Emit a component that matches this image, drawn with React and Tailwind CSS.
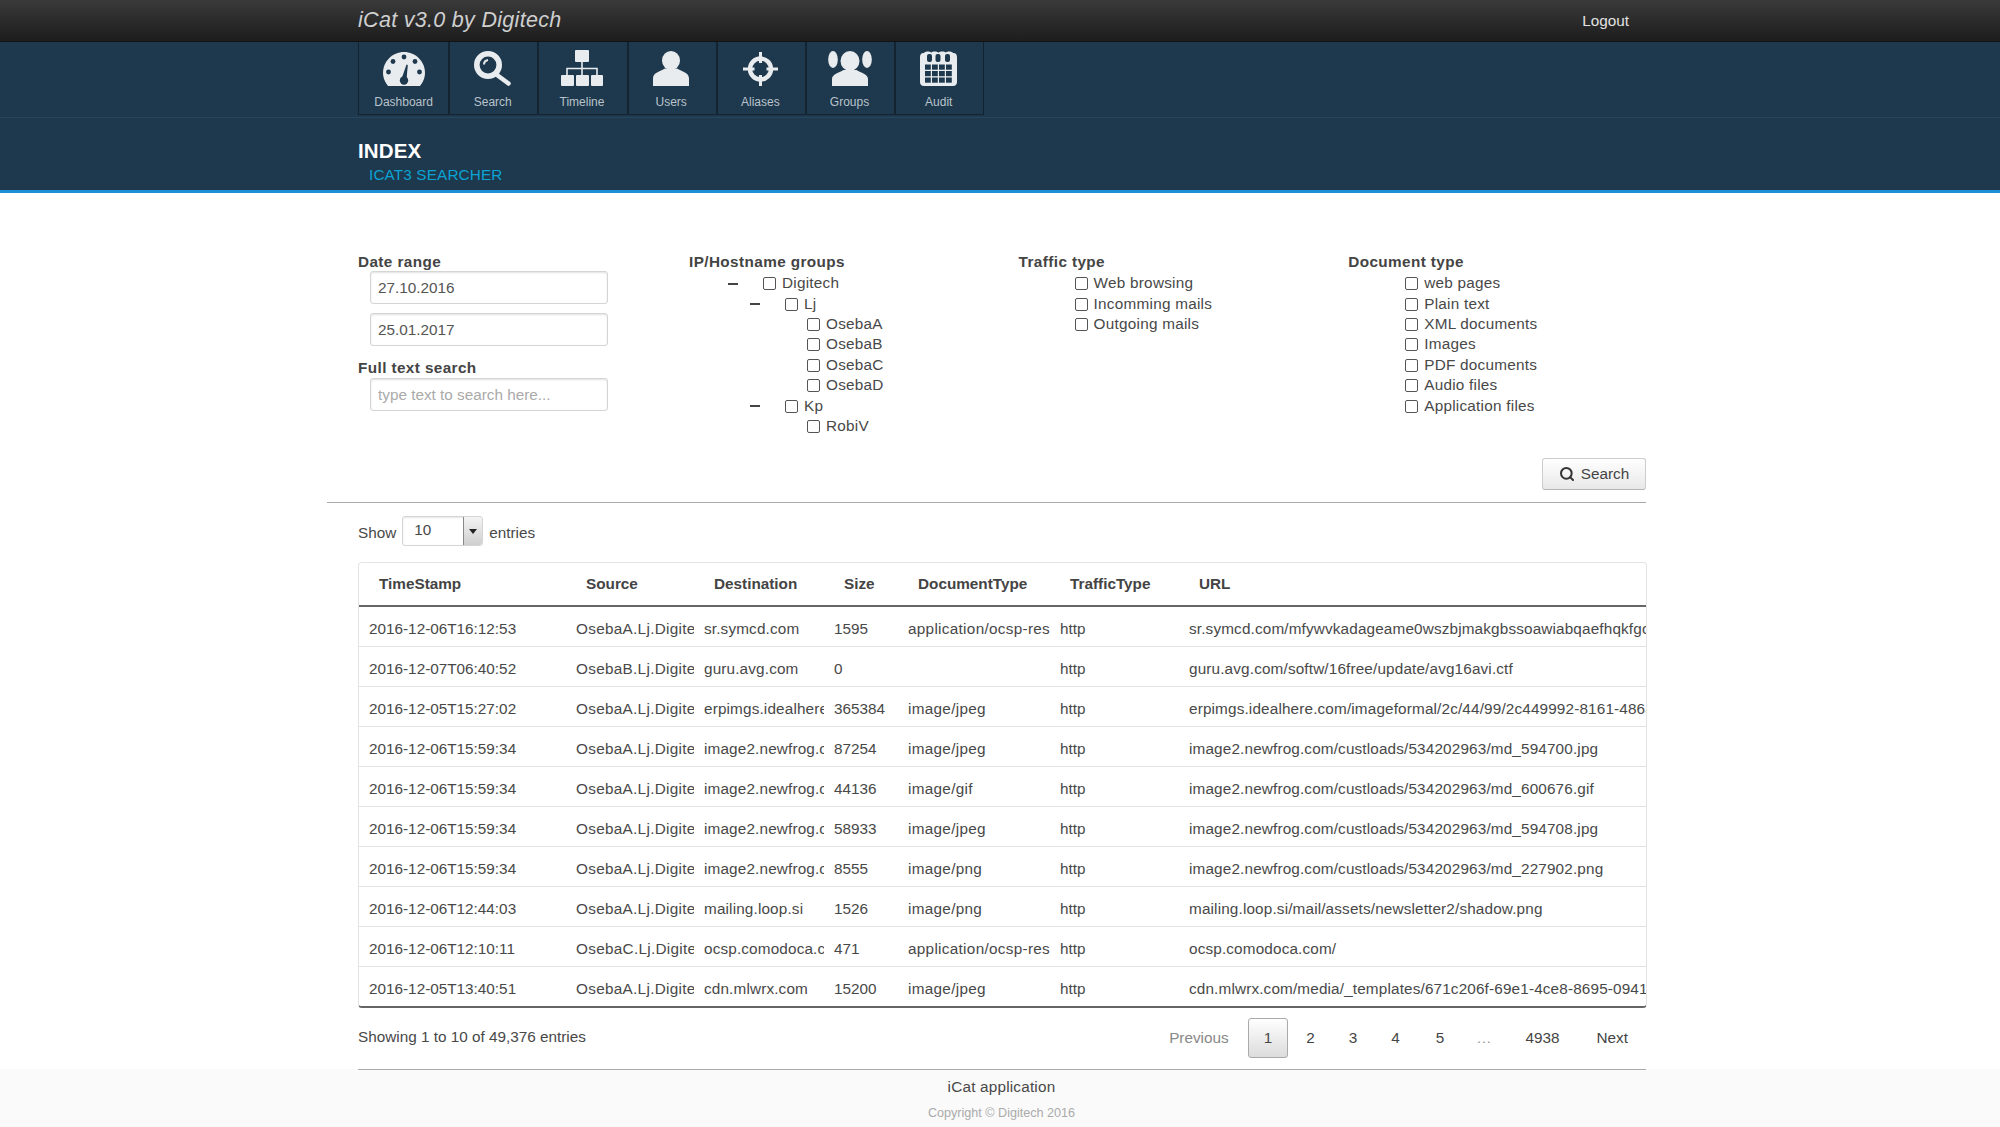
import React from 'react';
import { Search as SearchIcon } from 'lucide-react';

const NAV_BG = '#1e384d';

const DashboardIcon = () => (
  <svg width="42" height="34" viewBox="0 0 42 34" fill="#e8ecef">
    <path d="M5 34C1.500 29.500 0 25.500 0 21 0 9.400 9.400 0 21 0s21 9.400 21 21c0 4.500-1.500 8.500-5 13Z" />
    <g fill={NAV_BG}>
      <circle cx="21" cy="5" r="2.400" />
      <circle cx="10" cy="9.500" r="2.400" />
      <circle cx="32" cy="9.500" r="2.400" />
      <circle cx="5.500" cy="20" r="2.400" />
      <circle cx="36.500" cy="20" r="2.400" />
      <circle cx="21" cy="28.500" r="4.200" />
      <path d="M18.500 27 23.500 12.500 24.800 13 23.500 28Z" />
    </g>
  </svg>
);

const LensIcon = () => (
  <svg width="37" height="35" viewBox="0 0 37 35" fill="none" stroke="#e8ecef">
    <circle cx="14" cy="14" r="11.200" strokeWidth="5.600" />
    <path d="M23 24 34.500 32.500" strokeWidth="4.500" strokeLinecap="round" />
    <path d="M10 13.500C10 11 11.500 9.500 14 9" strokeWidth="2" />
  </svg>
);

const SitemapIcon = () => (
  <svg width="42" height="36" viewBox="0 0 42 36" fill="#e8ecef">
    <rect x="14" y="0" width="14" height="12" rx="1" />
    <rect x="0" y="25" width="13" height="11" rx="1" />
    <rect x="15" y="25" width="13" height="11" rx="1" />
    <rect x="30" y="25" width="12" height="11" rx="1" />
    <path d="M21 12V25M6 25V18.500H36V25" fill="none" stroke="#e8ecef" strokeWidth="1.600" />
  </svg>
);

const UserIcon = () => (
  <svg width="36" height="35" viewBox="0 0 36 35" fill="#e8ecef">
    <ellipse cx="18" cy="9.500" rx="9" ry="9.500" />
    <path d="M0 35V27.500C0 21.500 7 20.500 12 17.500H24C29 20.500 36 21.500 36 27.500V35Z" />
  </svg>
);

const CrosshairIcon = () => (
  <svg width="35" height="34" viewBox="0 0 35 34" fill="none" stroke="#e8ecef">
    <circle cx="17.500" cy="17" r="10.500" strokeWidth="4.400" />
    <path d="M0 17H11.500M23.500 17H35M17.500 0V11M17.500 23V34" strokeWidth="3" />
  </svg>
);

const GroupIcon = () => (
  <svg width="44" height="35" viewBox="0 0 44 35" fill="#e8ecef">
    <ellipse cx="5" cy="8.500" rx="4.800" ry="8.500" />
    <ellipse cx="39" cy="8.500" rx="4.800" ry="8.500" />
    <ellipse cx="22" cy="10" rx="9.500" ry="10" />
    <path d="M4 35V28C4 23 11 22 15.500 19H28.500C33 22 40 23 40 28V35Z" />
  </svg>
);

const CalendarIcon = () => {
  const cols = [5, 12, 19, 26];
  const rows = [13.500, 20, 26.500];
  return (
    <svg width="37" height="35" viewBox="0 0 37 35" fill="#e8ecef">
      <path d="M0 6C0 3 2 1.500 4 2 5 0 10 0 11 1.500 12.500 0 17 0 18.500 1.500 20 0 24.500 0 26 1.500 27 0 32 0 33 2 35 1.500 37 3 37 6V31C37 33.500 35.500 35 33 35H4C1.500 35 0 33.500 0 31Z" />
      <g fill={NAV_BG}>
        <rect x="7" y="3" width="5" height="8" rx="2" />
        <rect x="15.500" y="3" width="5" height="8" rx="2" />
        <rect x="25" y="3" width="5" height="8" rx="2" />
        {rows.map((y) => cols.map((x) => <rect key={`${x}-${y}`} x={x} y={y} width="5.800" height="5.200" />))}
      </g>
    </svg>
  );
};

const NAV_ITEMS = [
  { label: 'Dashboard', icon: <DashboardIcon /> },
  { label: 'Search', icon: <LensIcon /> },
  { label: 'Timeline', icon: <SitemapIcon /> },
  { label: 'Users', icon: <UserIcon /> },
  { label: 'Aliases', icon: <CrosshairIcon /> },
  { label: 'Groups', icon: <GroupIcon /> },
  { label: 'Audit', icon: <CalendarIcon /> },
];

const DEPTH_PADDING = ['pl-[39px]', 'pl-[61px]', 'pl-[83px]'];

const TREE = [
  { label: 'Digitech', depth: 0, parent: true },
  { label: 'Lj', depth: 1, parent: true },
  { label: 'OsebaA', depth: 2 },
  { label: 'OsebaB', depth: 2 },
  { label: 'OsebaC', depth: 2 },
  { label: 'OsebaD', depth: 2 },
  { label: 'Kp', depth: 1, parent: true },
  { label: 'RobiV', depth: 2 },
];

const TRAFFIC = ['Web browsing', 'Incomming mails', 'Outgoing mails'];
const DOCUMENTS = ['web pages', 'Plain text', 'XML documents', 'Images', 'PDF documents', 'Audio files', 'Application files'];

const HEADERS = [
  { label: 'TimeStamp', col: 'w-[207px]' },
  { label: 'Source', col: 'w-[128px]' },
  { label: 'Destination', col: 'w-[130px]' },
  { label: 'Size', col: 'w-[74px]' },
  { label: 'DocumentType', col: 'w-[152px]' },
  { label: 'TrafficType', col: 'w-[129px]' },
  { label: 'URL', col: 'w-auto' },
];

// per column tracking, the hinted text in the source runs slightly wider
const CELL_TRACKING = ['', 'tracking-[0.3px]', 'tracking-[0.15px]', '', 'tracking-[0.3px]', '', 'tracking-[0.15px]'];

const PAGES = [
  { label: '2', className: 'ml-[2px] px-[16px] text-[#444]' },
  { label: '3', className: 'ml-[2px] px-[16px] text-[#444]' },
  { label: '4', className: 'ml-[2px] px-[16px] text-[#444]' },
  { label: '5', className: 'ml-[4px] px-[16px] text-[#444]' },
  { label: '…', className: 'ml-[2px] px-[14px] text-[#999]' },
  { label: '4938', className: 'ml-[4px] px-[16px] text-[#444]' },
  { label: 'Next', className: 'ml-[5px] px-[16px] text-[#444]' },
];

const ROWS = [
  ['2016-12-06T16:12:53', 'OsebaA.Lj.Digitech', 'sr.symcd.com', '1595', 'application/ocsp-response', 'http', 'sr.symcd.com/mfywvkadageame0wszbjmakgbssoawiabqaefhqkfgcfg'],
  ['2016-12-07T06:40:52', 'OsebaB.Lj.Digitech', 'guru.avg.com', '0', '', 'http', 'guru.avg.com/softw/16free/update/avg16avi.ctf'],
  ['2016-12-05T15:27:02', 'OsebaA.Lj.Digitech', 'erpimgs.idealhere.com', '365384', 'image/jpeg', 'http', 'erpimgs.idealhere.com/imageformal/2c/44/99/2c449992-8161-486a-b2c1'],
  ['2016-12-06T15:59:34', 'OsebaA.Lj.Digitech', 'image2.newfrog.com', '87254', 'image/jpeg', 'http', 'image2.newfrog.com/custloads/534202963/md_594700.jpg'],
  ['2016-12-06T15:59:34', 'OsebaA.Lj.Digitech', 'image2.newfrog.com', '44136', 'image/gif', 'http', 'image2.newfrog.com/custloads/534202963/md_600676.gif'],
  ['2016-12-06T15:59:34', 'OsebaA.Lj.Digitech', 'image2.newfrog.com', '58933', 'image/jpeg', 'http', 'image2.newfrog.com/custloads/534202963/md_594708.jpg'],
  ['2016-12-06T15:59:34', 'OsebaA.Lj.Digitech', 'image2.newfrog.com', '8555', 'image/png', 'http', 'image2.newfrog.com/custloads/534202963/md_227902.png'],
  ['2016-12-06T12:44:03', 'OsebaA.Lj.Digitech', 'mailing.loop.si', '1526', 'image/png', 'http', 'mailing.loop.si/mail/assets/newsletter2/shadow.png'],
  ['2016-12-06T12:10:11', 'OsebaC.Lj.Digitech', 'ocsp.comodoca.com', '471', 'application/ocsp-response', 'http', 'ocsp.comodoca.com/'],
  ['2016-12-05T13:40:51', 'OsebaA.Lj.Digitech', 'cdn.mlwrx.com', '15200', 'image/jpeg', 'http', 'cdn.mlwrx.com/media/_templates/671c206f-69e1-4ce8-8695-0941a7b3'],
];

const Check = ({ label }) => (
  <label className="flex items-center gap-[6px] tracking-[0.25px]">
    <input type="checkbox" className="h-[13px] w-[13px] shrink-0 appearance-none rounded-[2px] border-[1.5px] border-[#555] bg-white" />
    <span>{label}</span>
  </label>
);

const FieldLabel = ({ children }) => <div className="h-[20px] font-bold leading-[23px] tracking-[0.4px] text-[#444]">{children}</div>;

const TextField = ({ className, ...props }) => (
  <input
    {...props}
    className={`ml-[12px] block h-[33px] w-[238px] rounded-[3px] border border-[#d5d5d5] px-[7px] text-[#555] shadow-[inset_0_1px_2px_rgba(0,0,0,0.12)] outline-none placeholder:text-[#aaa] ${className || ''}`}
  />
);

const PlainList = ({ title, items, pad }) => (
  <div className="w-[329.600px] shrink-0">
    <FieldLabel>{title}</FieldLabel>
    <div className={`mt-[3.500px] ${pad}`}>
      {items.map((item) => (
        <div key={item} className="flex h-[20.400px] items-center">
          <Check label={item} />
        </div>
      ))}
    </div>
  </div>
);

export default function App() {
  return (
    <div className="min-h-[1127px] overflow-hidden bg-white font-['Liberation_Sans',Arial,sans-serif] text-[15.300px] text-[#484848]">
      <header className="h-[42px] border-b border-[#141414] bg-gradient-to-b from-[#3a3a3a] to-[#1d1d1d]">
        <div className="ml-[358px] flex h-full w-[1271px] items-center justify-between">
          <span className="text-[21.500px] italic tracking-[0.3px] text-[#cfcfcf]">iCat v3.0 by Digitech</span>
          <a className="mt-[1px] text-[#e2e2e2]">Logout</a>
        </div>
      </header>

      <div className="h-[151px] border-b-[3px] border-[#1b8fd6] bg-[#1e384d]">
        <div className="h-[76px] border-b border-[#27465c]">
          <nav className="ml-[358px] flex h-[73px] w-fit border-x border-b border-[#13232f]">
            {NAV_ITEMS.map((item, i) => (
              <div key={item.label} className={`flex w-[89.200px] flex-col items-center ${i > 0 ? 'border-l-2 border-[#13232f] pr-[2px]' : ''}`}>
                <div className="flex h-[44px] items-end">{item.icon}</div>
                <span className="mt-[9px] text-[12px] leading-[14px] text-[#b9c3cb]">{item.label}</span>
              </div>
            ))}
          </nav>
        </div>
        <div className="ml-[358px] pt-[21px]">
          <h1 className="text-[20.500px] font-bold leading-[24px] tracking-[0.15px] text-white">INDEX</h1>
          <div className="ml-[11px] mt-[2px] leading-[20px] tracking-[0.15px] text-[#0ba3d3]">ICAT3 SEARCHER</div>
        </div>
      </div>

      <main className="ml-[327px] w-[1319px] pt-[57px]">
        <section className="flex pl-[31px]">
          <div className="w-[331px] shrink-0">
            <FieldLabel>Date range</FieldLabel>
            <TextField defaultValue="27.10.2016" className="mt-[1px]" />
            <TextField defaultValue="25.01.2017" className="mt-[9px]" />
            <div className="mt-[10px]">
              <FieldLabel>Full text search</FieldLabel>
            </div>
            <TextField placeholder="type text to search here..." className="mt-[2px]" />
          </div>

          <div className="w-[329.600px] shrink-0">
            <FieldLabel>IP/Hostname groups</FieldLabel>
            <div className="mt-[3.500px]">
              {TREE.map((node) => (
                <div key={node.label} className={`flex h-[20.400px] items-center ${DEPTH_PADDING[node.depth]}`}>
                  <span className={`mr-[25px] h-[2px] w-[10px] bg-[#444] ${node.parent ? '' : 'invisible'}`} />
                  <Check label={node.label} />
                </div>
              ))}
            </div>
          </div>

          <PlainList title="Traffic type" items={TRAFFIC} pad="pl-[56px]" />
          <PlainList title="Document type" items={DOCUMENTS} pad="pl-[57px]" />
        </section>

        <div className="mt-[21.500px] flex justify-end">
          <button className="flex h-[32px] w-[104px] items-center justify-center gap-[6px] rounded-[3px] border border-[#ccc] border-b-[#b5b5b5] bg-gradient-to-b from-white to-[#e8e8e8] text-[#444]">
            <SearchIcon size={16} strokeWidth={3} className="text-[#333]" />
            Search
          </button>
        </div>
        <hr className="mt-[12px] border-t-[1.500px] border-[#aaa]" />

        <div className="ml-[31px] w-[1289px]">
          <div className="mt-[13px] flex h-[30px] items-center">
            <span className="mt-[4px]">Show</span>
            <div className="ml-[6px] flex h-[30px] w-[81px] items-center justify-between rounded-[3px] border border-[#d5d5d5] shadow-[inset_0_1px_2px_rgba(0,0,0,0.1)]">
              <span className="mb-[2px] ml-[11px]">10</span>
              <span className="flex h-full w-[19px] items-center justify-center rounded-r-[3px] border-l border-[#888] bg-gradient-to-b from-[#f4f4f4] to-[#cfcfcf]">
                <span className="h-0 w-0 border-x-[4px] border-t-[5px] border-x-transparent border-t-[#222]" />
              </span>
            </div>
            <span className="ml-[6px] mt-[4px]">entries</span>
          </div>

          <div className="mt-[16px] overflow-hidden rounded-[4px] border border-b-2 border-[#e4e4e4] border-b-[#666]">
            <table className="w-full table-fixed border-collapse">
              <colgroup>
                {HEADERS.map((h) => <col key={h.label} className={h.col} />)}
              </colgroup>
              <thead>
                <tr className="h-[43px] border-b-2 border-[#666]">
                  {HEADERS.map((h) => (
                    <th key={h.label} className="pl-[20px] text-left font-bold text-[#444]">{h.label}</th>
                  ))}
                </tr>
              </thead>
              <tbody>
                {ROWS.map((row, i) => (
                  <tr key={i} className={`h-[40px] ${i < ROWS.length - 1 ? 'border-b border-[#e2e2e2]' : ''}`}>
                    {row.map((cell, j) => (
                      <td key={j} className={`overflow-hidden whitespace-nowrap pl-[10px] pt-[6px] ${CELL_TRACKING[j]}`}>{cell}</td>
                    ))}
                  </tr>
                ))}
              </tbody>
            </table>
          </div>

          <div className="mt-[9.500px] flex items-center justify-between">
            <span>Showing 1 to 10 of 49,376 entries</span>
            <div className="mr-[3px] flex items-center">
              <span className="px-[16px] leading-[39px] text-[#888]">Previous</span>
              <span className="ml-[3px] h-[40px] rounded-[3px] border border-[#aaa] bg-gradient-to-b from-white to-[#dcdcdc] px-[15px] leading-[38px]">1</span>
              {PAGES.map((p) => (
                <span key={p.label} className={`leading-[39px] ${p.className}`}>{p.label}</span>
              ))}
            </div>
          </div>
        </div>
      </main>

      <footer className="mt-[11px] h-[58px] bg-[#fafafa]">
        <div className="ml-[358px] w-[1288px] border-t-[1.500px] border-[#aaa]" />
        <div className="ml-[358px] w-[1288px] pr-[1px] pt-[8px] text-center">
          <div className="leading-[18px] tracking-[0.2px]">iCat application</div>
          <div className="mt-[10px] text-[12.600px] leading-[15px] text-[#aaa]">Copyright © Digitech 2016</div>
        </div>
      </footer>
    </div>
  );
}
